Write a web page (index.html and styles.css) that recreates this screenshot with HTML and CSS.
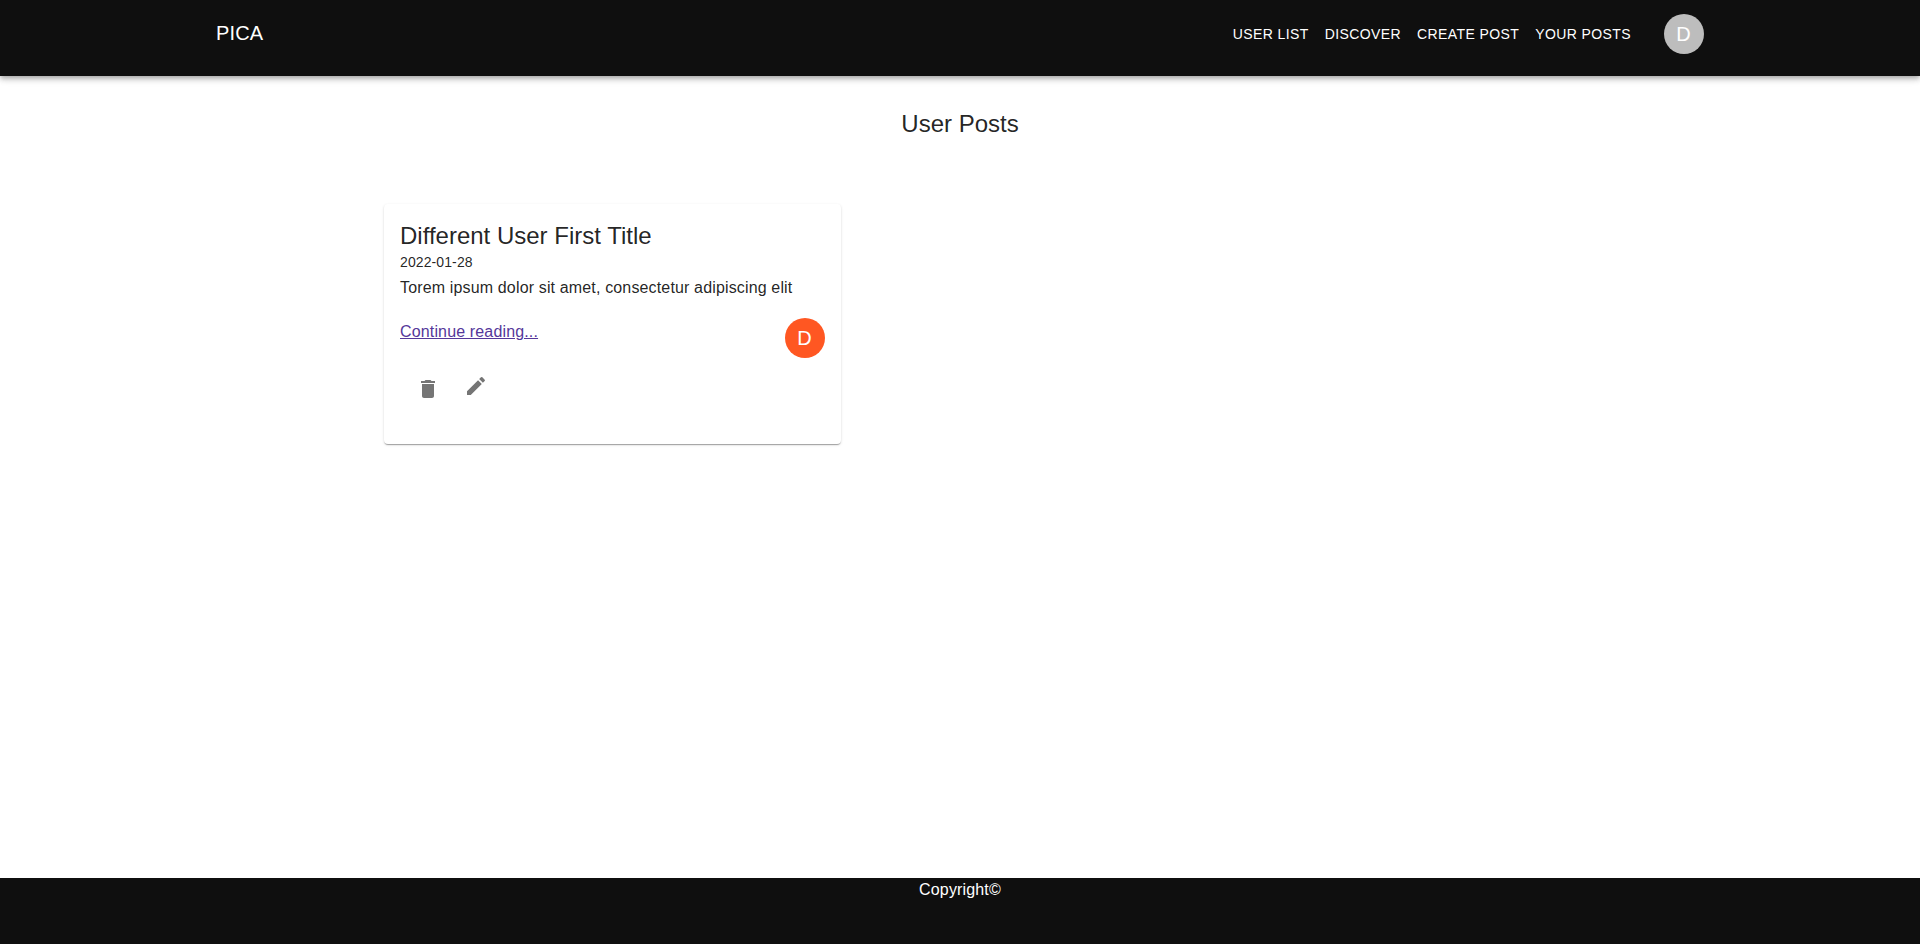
FILE: index.html
```html
<!DOCTYPE html>
<html lang="en">
<head>
<meta charset="utf-8">
<title>Pica</title>
<link rel="stylesheet" href="styles.css">
</head>
<body>
<header class="app-bar">
  <div class="toolbar">
    <div class="brand">PICA</div>
    <nav class="nav">
      <a class="nav-link">User List</a>
      <a class="nav-link">Discover</a>
      <a class="nav-link">Create Post</a>
      <a class="nav-link">Your Posts</a>
    </nav>
    <div class="avatar">D</div>
  </div>
</header>
<main class="content">
  <h1 class="page-title">User Posts</h1>
  <section class="posts">
    <article class="card">
      <h2 class="card-title">Different User First Title</h2>
      <div class="card-date">2022-01-28</div>
      <p class="card-text">Torem ipsum dolor sit amet, consectetur adipiscing elit</p>
      <div class="card-row">
        <a class="card-link" href="#">Continue reading...</a>
        <div class="avatar avatar-author">D</div>
      </div>
      <div class="actions">
        <svg class="icon icon-delete" viewBox="0 0 24 24"><path d="M6 19c0 1.100.9 2 2 2h8c1.100 0 2-.9 2-2V7H6v12zM19 4h-3.500l-1-1h-5l-1 1H5v2h14V4z"/></svg>
        <svg class="icon" viewBox="0 0 24 24"><path d="M3 17.250V21h3.750L17.810 9.940l-3.750-3.750L3 17.250zM20.710 7.040c.39-.39.39-1.020 0-1.410l-2.340-2.340a.9959.9959 0 0 0-1.410 0l-1.830 1.830 3.750 3.750 1.830-1.830z"/></svg>
      </div>
    </article>
  </section>
</main>
<footer class="footer">Copyright©</footer>
</body>
</html>
```
FILE: styles.css
```css
* { box-sizing: border-box; }
body {
  margin: 0;
  min-height: 100vh;
  display: flex;
  flex-direction: column;
  background: #fff;
  color: rgba(0, 0, 0, 0.87);
  font-family: Helvetica, "Liberation Sans", Arial, sans-serif;
  font-size: 16px;
  line-height: 24px;
  letter-spacing: 0.00938em;
}
.app-bar {
  height: 76px;
  background: #0f0f0f;
  color: #fff;
  box-shadow: 0 2px 4px -1px rgba(0, 0, 0, 0.2), 0 4px 5px rgba(0, 0, 0, 0.14), 0 1px 10px rgba(0, 0, 0, 0.12);
}
.toolbar {
  width: 1488px;
  height: 68px;
  margin: 0 auto;
  display: flex;
  align-items: center;
}
.brand {
  flex: 1;
  padding-bottom: 2px;
  font-size: 20px;
  line-height: 32px;
  letter-spacing: 0.0075em;
}
.nav { display: flex; margin-right: 25px; }
.nav-link {
  padding: 6px 8px;
  font-size: 14px;
  line-height: 24.500px;
  letter-spacing: 0.02857em;
  text-transform: uppercase;
}
.avatar {
  width: 40px;
  height: 40px;
  padding: 0 1px 1px 0;
  display: flex;
  align-items: center;
  justify-content: center;
  flex-shrink: 0;
  border-radius: 50%;
  background: #bdbdbd;
  color: #fff;
  font-size: 20px;
  line-height: 20px;
  letter-spacing: 0;
}
.avatar-author { background: #ff5722; }
.content { flex: 1; }
.page-title {
  margin: 32px 0 64px;
  font-size: 24px;
  font-weight: 400;
  line-height: 32px;
  letter-spacing: 0;
  text-align: center;
}
.posts {
  width: 1152px;
  margin: 0 auto;
}
.card {
  width: 457px;
  height: 240px;
  padding: 16px;
  border-radius: 4px;
  background: #fff;
  box-shadow: 0 2px 1px -1px rgba(0, 0, 0, 0.2), 0 1px 1px rgba(0, 0, 0, 0.14), 0 1px 3px rgba(0, 0, 0, 0.12);
}
.card-title {
  margin: 0;
  font-size: 24px;
  font-weight: 400;
  line-height: 32px;
  letter-spacing: 0;
}
.card-date {
  font-size: 14px;
  line-height: 20px;
  letter-spacing: 0.0075em;
}
.card-text { margin: 4px 0 18px; }
.card-row {
  display: flex;
  justify-content: space-between;
  align-items: flex-start;
}
.card-link { padding-top: 2px; color: #55379a; }
.actions {
  display: flex;
  gap: 24px;
  padding: 16px;
}
.icon { width: 24px; height: 24px; fill: #757575; }
.icon-delete { margin-top: 3px; }
.footer {
  height: 66px;
  background: #0f0f0f;
  color: #fff;
  text-align: center;
}
```
